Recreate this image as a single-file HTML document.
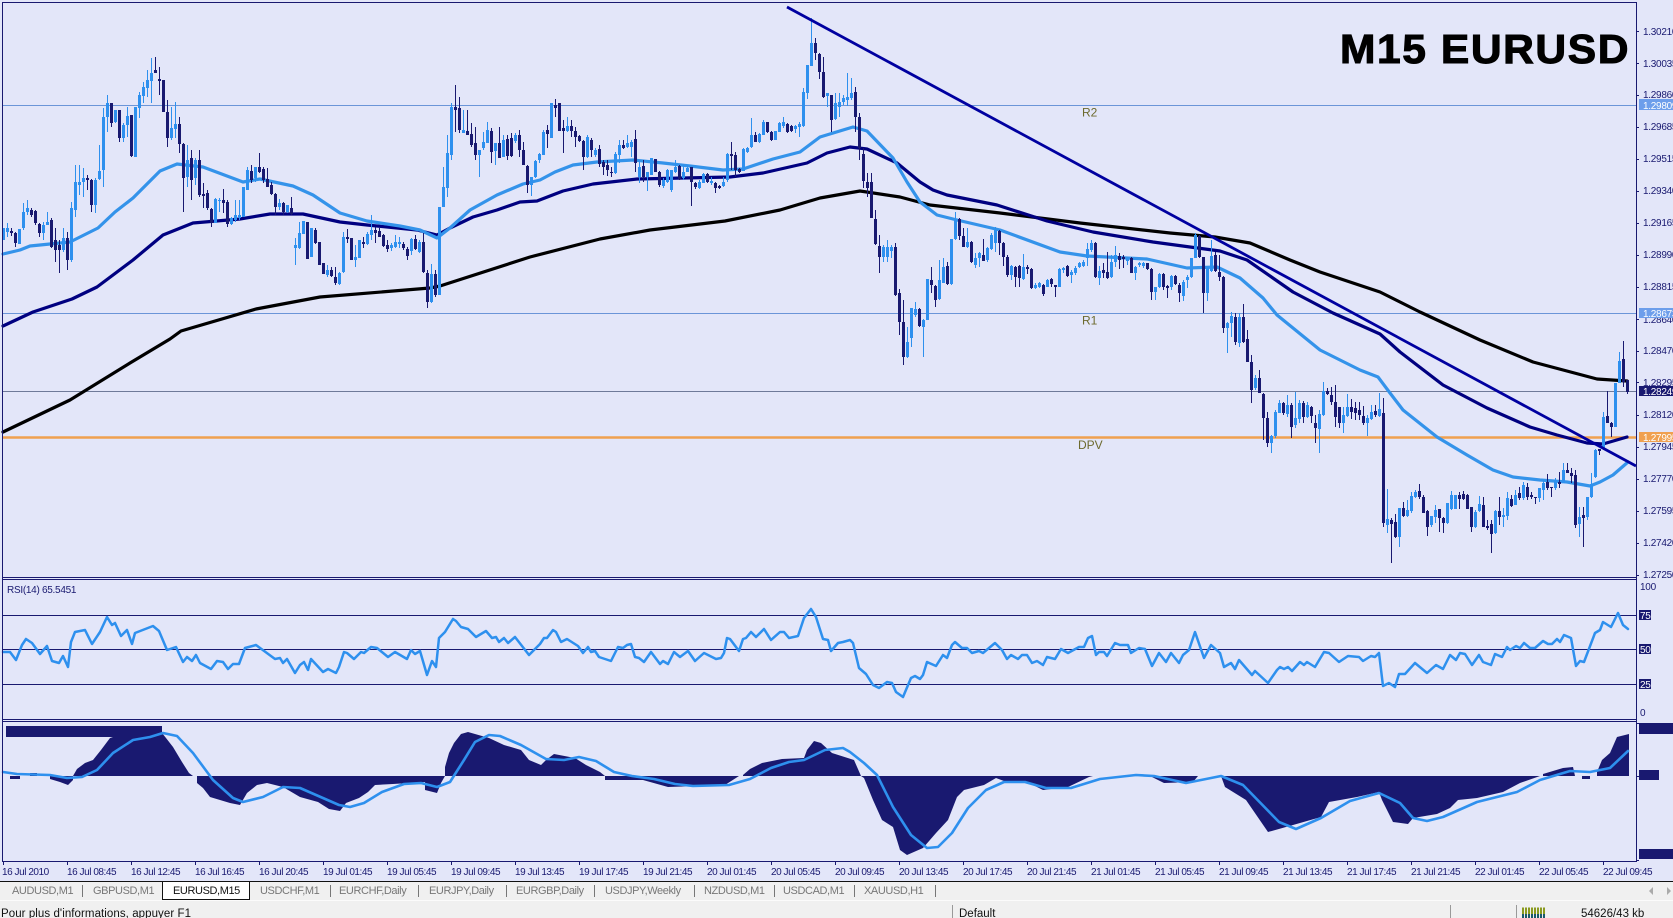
<!DOCTYPE html>
<html><head><meta charset="utf-8"><title>M15 EURUSD</title>
<style>
html,body{margin:0;padding:0;background:#e3e6f9;overflow:hidden}
svg{display:block}
text{font-family:"Liberation Sans",sans-serif}
.p{font-size:10px;fill:#191970;letter-spacing:-.28px}
.t{font-size:10px;fill:#191970;letter-spacing:-.45px}
.w{font-size:10px;fill:#fff;letter-spacing:-.28px}
.tb{font-size:11px;fill:#777;letter-spacing:-.4px}
.st{font-size:11.5px;fill:#111}
.ln{fill:none;stroke-linejoin:round;stroke-linecap:round}
.lw,.dw{fill:none;stroke-width:1;shape-rendering:crispEdges}
.lb,.db{fill:none;stroke-width:3;shape-rendering:crispEdges}
.lw,.lb{stroke:#2e90ee}
.dw,.db{stroke:#191970}
</style></head><body>
<svg width="1673" height="918" viewBox="0 0 1673 918" xmlns="http://www.w3.org/2000/svg">
<rect width="1673" height="881" fill="#e3e6f9"/>

<!-- horizontal levels -->
<path d="M3 105.5H1636M3 313.5H1636" stroke="#6b95d8" stroke-width="1" fill="none"/>
<path d="M3 391.5H1636" stroke="#6f7a99" stroke-width="1" fill="none"/>
<path d="M3 437.5H1636" stroke="#f0a050" stroke-width="2.4" fill="none"/>
<text x="1082" y="116.5" font-size="12" fill="#6d6a2e">R2</text>
<text x="1082" y="324.5" font-size="12" fill="#6d6a2e">R1</text>
<text x="1078" y="449" font-size="12" fill="#6d6a2e">DPV</text>

<!-- moving averages -->
<polyline class="ln" stroke="#000" stroke-width="3.2" points="3,432 70,400 130,363 170,339 181,331 256,309 320,297 430,288 440,286 530,257 600,239 650,230 725,221 780,210 820,198 860,191 900,197 930,205 1000,213 1080,223 1170,233 1215,237 1250,243 1290,260 1320,272 1380,292 1420,312 1480,340 1533,362 1597,379 1627,381"/>
<polyline class="ln" stroke="#000080" stroke-width="3.2" points="3,326 33,312 72,299 97,287 133,260 163,235 193,223 240,219 270,214 303,214 340,222 367,225 417,230 437,235 450,228 473,217 497,210 520,202 537,201 563,191 593,184 637,179 730,177 763,173 807,163 827,153 850,147 867,149 897,163 920,182 933,190 947,195 997,205 1047,221 1093,232 1153,242 1190,247 1220,251 1247,260 1293,292 1333,313 1380,334 1400,352 1443,385 1487,408 1530,427 1557,435 1587,443 1603,444 1627,437"/>
<polyline class="ln" stroke="#3493ea" stroke-width="3.2" points="3,254 20,250 30,246 70,242 98,228 115,212 133,198 160,171 177,164 203,167 243,182 260,179 293,186 313,195 340,213 367,221 400,226 420,230 437,238 450,228 470,210 497,195 523,184 540,180 555,172 573,165 597,162 633,160 663,163 690,166 723,170 743,169 773,159 800,152 820,137 853,127 867,131 893,158 907,182 920,202 937,215 957,220 1000,230 1060,252 1087,256 1147,259 1187,268 1217,267 1240,278 1263,298 1277,315 1320,350 1360,370 1378,377 1390,393 1403,410 1437,437 1467,455 1493,470 1513,477 1540,480 1567,482 1590,486 1600,482 1613,475 1628,462"/>

<!-- candles group A -->
<g transform="translate(-.5 0)">
<path class="lw" d="M4 228V240M8 223V237M20 229V244M24 203V230M28 200V215M44 222V240M48 212V225M64 228V252M72 202V262M76 165V217M80 165V195M84 168V197M96 178V213M100 145V180M104 108V187M108 95V132M116 110V123M124 123V142M128 107V137M136 107V157M140 92V118M144 82V103M148 70V97M152 58V103M172 107V140M176 102V138M188 145V187M196 158V185M216 198V223M220 198V212M232 217V225M236 200V222M240 200V220M244 187V217M248 167V190M256 167V182M280 199V210M288 205V213M296 238V265M300 222V249M304 221V234M312 228V257M328 265V277M340 272V285M344 232V273M356 245V267M360 240V258M368 232V245M372 215V240M392 243V251M396 235V248M400 237V248M412 238V255M420 240V253M432 264V303"/>
<path class="lb" d="M4 228V240M8 228V232M20 229V244M24 212V228M28 208V212M44 225V233M48 222V225M64 238V250M72 208V260M76 182V210M80 182V185M84 178V182M96 180V205M100 171V179M104 117V170M108 103V117M116 110V122M124 125V138M128 116V125M136 107V157M140 95V108M144 87V96M148 80V88M152 73V81M172 128V138M176 124V129M188 160V177M196 160V178M216 199V223M220 200V201M232 218V224M236 215V220M240 215V218M244 187V217M248 170V190M256 167V178M280 203V207M288 205V212M296 245V248M300 233V248M304 221V234M312 228V257M328 270V275M340 273V284M344 237V272M356 257V260M360 240V258M368 234V244M372 230V235M392 245V248M396 242V247M400 242V244M412 239V251M420 242V252M432 274V302"/>
<path class="dw" d="M12 228V236M16 232V247M32 208V217M36 210V225M40 223V237M52 218V248M56 228V262M60 240V273M68 232V270M88 175V190M92 179V212M112 103V127M120 110V142M132 115V157M156 57V73M160 67V95M164 80V112M168 100V147M180 117V153M184 143V212M192 150V200M200 150V197M204 183V208M208 190V210M212 208V227M224 189V213M228 200V227M252 165V183M260 153V173M264 167V183M268 168V187M272 182V195M276 193V215M284 202V215M292 197V215M308 222V259M316 228V244M320 242V265M324 263V274M332 267V277M336 267V285M348 229V243M352 238V260M364 237V248M376 227V243M380 228V237M384 234V247M388 240V252M404 242V250M408 247V260M416 235V250M424 233V273M428 270V308M436 270V297"/>
<path class="db" d="M12 231V233M16 233V243M32 210V215M36 211V223M40 224V233M52 220V247M56 240V250M60 245V250M68 238V260M88 178V180M92 180V205M112 103V123M120 110V138M132 115V156M156 70V73M160 79V81M164 80V112M168 112V138M180 124V144M184 144V178M192 158V180M200 160V195M204 194V196M208 193V208M212 209V223M224 200V203M228 202V224M252 171V180M260 167V172M264 169V180M268 179V187M272 185V194M276 194V207M284 203V212M292 208V214M308 222V259M316 230V243M320 242V265M324 263V274M332 270V276M336 277V283M348 237V239M352 238V260M364 242V244M376 230V233M380 231V237M384 235V246M388 245V249M404 244V248M408 249V256M416 239V249M424 242V272M428 273V302M436 274V295"/>
</g>

<!-- candles group B -->
<g transform="translate(.5 0)">
<path class="lw" d="M439 207V295M443 167V207M447 135V197M451 103V160M463 110V133M479 150V177M483 132V150M487 122V143M495 143V165M503 135V157M515 133V143M531 177V196M535 160V178M539 153V163M543 130V155M551 103V138M567 117V132M587 135V158M595 148V157M615 152V174M619 140V163M627 135V148M631 140V157M639 160V183M647 172V191M651 158V175M663 178V188M667 169V183M671 170V192M675 160V173M683 165V180M687 165V172M699 180V189M703 173V183M711 177V185M723 177V187M727 153V182M743 148V171M747 147V153M751 118V148M759 133V143M763 120V135M775 131V140M779 122V132M783 117V128M795 125V133M799 122V137M803 88V127M807 65V99M811 18V65M827 93V107M835 93V120M839 93V117M843 95V105M847 73V106M851 78V100M883 245V262M887 240V262M891 245V258M907 327V358M911 308V347M915 302V317M923 319V357M927 279V320M939 260V300M943 258V283M951 239V285M955 212V240M967 228V248M975 253V268M979 252V267M987 247V262M991 233V250M995 227V252M1011 265V280M1023 254V280M1035 283V289M1039 282V288M1047 279V287M1059 268V287M1063 267V273M1071 270V283M1075 266V275M1079 262V268M1083 260V267M1087 243V266M1091 240V252M1099 266V285M1111 255V278M1115 246V267M1127 257V265M1135 266V280M1139 262V267M1143 262V268M1155 287V300M1159 273V288M1171 275V290M1183 280V301M1187 275V288M1191 258V278M1195 233V258M1207 267V301M1211 240V272M1227 322V353M1231 312V337M1239 313V347M1255 375V390M1271 435V453M1275 410V438M1279 400V413M1287 395V417M1295 392V428M1299 400V423M1307 402V418M1319 410V453M1323 382V416M1343 407V433M1347 394V417M1367 415V436M1371 405V420M1379 393V417M1387 489V533M1399 508V547M1407 500V517M1411 492V513M1415 490V498M1431 516V527M1435 505V523M1447 503V524M1451 491V510M1455 495V509M1475 510V528M1479 496V512M1495 510V534M1503 508V527M1507 492V520M1515 490V505M1523 482V500M1539 488V502M1543 480V500M1555 478V490M1563 463V483M1579 507V537M1587 497V520M1591 473V498M1595 449V478M1603 412V450M1615 383V427M1619 352V383"/>
<path class="lb" d="M439 207V295M443 187V207M447 153V188M451 107V155M463 130V133M479 150V155M483 142V148M487 130V143M495 143V151M503 140V157M515 135V141M531 177V185M535 161V177M539 154V160M543 132V155M551 103V138M567 126V131M587 137V157M595 150V155M615 154V173M619 145V155M627 143V147M631 142V147M639 167V177M647 172V177M651 158V175M663 180V186M667 170V182M671 170V190M675 167V172M683 172V178M687 168V172M699 182V188M703 174V183M711 181V183M723 182V186M727 154V180M743 149V171M747 148V152M751 135V147M759 134V142M763 122V135M775 131V140M779 123V132M783 122V126M795 126V129M799 124V127M803 92V126M807 65V93M811 43V66M827 93V96M835 103V119M839 102V107M843 98V102M847 97V100M851 93V98M883 247V257M887 247V257M891 247V251M907 342V357M911 308V338M915 309V315M923 320V327M927 279V320M939 280V299M943 267V283M951 239V284M955 220V239M967 242V247M975 258V265M979 253V258M987 248V260M991 235V249M995 230V243M1011 266V275M1023 267V279M1035 285V288M1039 283V287M1047 280V287M1059 269V287M1063 268V270M1071 272V275M1075 268V273M1079 263V267M1083 262V266M1087 249V258M1091 243V250M1099 271V278M1111 262V277M1115 255V262M1127 258V261M1135 267V273M1139 263V265M1143 263V266M1155 287V292M1159 274V287M1171 276V287M1183 282V296M1187 277V280M1191 258V277M1195 235V258M1207 268V293M1211 256V271M1227 323V328M1231 316V323M1239 317V343M1255 378V388M1271 436V443M1275 412V436M1279 403V413M1287 405V414M1295 418V425M1299 403V419M1307 405V417M1319 414V429M1323 391V415M1343 415V423M1347 407V416M1367 418V423M1371 412V419M1379 409V416M1387 519V525M1399 508V537M1407 510V516M1411 496V511M1415 492V497M1431 516V525M1435 510V517M1447 503V523M1451 495V509M1455 495V509M1475 512V527M1479 504V511M1495 511V533M1503 515V517M1507 498V516M1515 495V505M1523 485V498M1539 488V498M1543 483V490M1555 480V488M1563 470V483M1579 517V524M1587 497V517M1591 484V497M1595 450V477M1603 417V448M1615 383V427M1619 361V383"/>
<path class="dw" d="M455 85V132M459 97V133M467 110V135M471 123V147M475 127V160M491 128V163M499 127V158M507 135V160M511 133V157M519 130V157M523 142V165M527 165V193M547 125V148M555 99V117M559 103V131M563 120V153M571 120V137M575 127V147M579 135V142M583 140V170M591 138V157M599 145V167M603 160V175M607 160V176M611 167V177M623 140V149M635 130V172M643 160V182M655 159V172M659 171V187M679 165V180M691 167V206M695 182V189M707 173V183M715 182V193M719 185V189M731 142V170M735 152V177M739 168V173M755 132V142M767 122V133M771 131V141M787 123V133M791 125V132M815 38V60M819 53V79M823 57V98M831 95V132M855 87V132M859 113V160M863 148V188M867 173V197M871 173V218M875 210V245M879 235V273M895 243V296M899 289V335M903 300V365M919 308V327M931 267V293M935 285V307M947 262V285M959 218V240M963 228V247M971 241V263M983 239V261M999 230V255M1003 242V266M1007 255V277M1015 266V287M1019 265V287M1027 265V274M1031 268V289M1043 284V296M1051 278V287M1055 285V297M1067 265V277M1095 242V278M1103 263V278M1107 252V279M1119 253V269M1123 255V268M1131 257V273M1147 263V270M1151 268V300M1163 273V290M1167 285V298M1175 275V285M1179 283V302M1199 235V258M1203 257V313M1215 252V272M1219 255V281M1223 276V333M1235 313V345M1243 304V343M1247 330V362M1251 355V403M1259 370V393M1263 393V440M1267 412V447M1283 402V415M1291 403V438M1303 401V423M1311 406V423M1315 415V443M1327 388V395M1331 387V405M1335 385V427M1339 407V428M1351 399V419M1355 402V420M1359 402V420M1363 406V425M1375 405V417M1383 398V527M1391 518V563M1395 514V538M1403 502V517M1419 484V499M1423 495V513M1427 510V536M1439 509V532M1443 517V533M1459 492V509M1463 491V500M1467 494V509M1471 507V532M1483 497V527M1487 520V530M1491 520V553M1499 497V525M1511 495V507M1519 487V500M1527 483V500M1531 492V499M1535 497V504M1547 474V490M1551 487V497M1559 472V488M1567 463V473M1571 468V483M1575 470V528M1583 507V547M1599 449V455M1607 391V423M1611 422V437M1623 341V387M1627 380V394"/>
<path class="db" d="M455 107V110M459 108V130M467 131V135M471 134V145M475 143V155M491 131V152M499 143V158M507 139V156M511 138V156M519 135V150M523 150V165M527 166V185M547 130V134M555 105V108M559 103V131M563 128V131M571 126V131M575 131V137M579 136V141M583 141V157M591 140V150M599 149V164M603 162V167M607 165V170M611 172V173M623 145V148M635 139V163M643 166V177M655 159V172M659 172V185M679 166V179M691 167V182M695 183V187M707 174V182M715 183V188M719 186V188M731 154V156M735 155V170M739 169V172M755 135V142M767 122V132M771 132V140M787 124V132M791 126V131M815 43V53M819 54V72M823 72V97M831 95V120M855 92V117M859 117V148M863 154V181M867 182V188M871 182V218M875 219V244M879 246V257M895 247V295M899 293V322M903 322V357M919 309V326M931 280V285M935 286V300M947 266V284M959 219V236M963 236V247M971 242V262M983 255V261M999 231V243M1003 243V257M1007 257V275M1015 267V277M1019 266V278M1027 267V269M1031 269V288M1043 285V294M1051 279V284M1055 285V287M1067 266V276M1095 243V277M1103 270V273M1107 272V278M1119 256V260M1123 257V259M1131 258V273M1147 263V269M1151 269V292M1163 274V287M1167 286V288M1175 276V284M1179 285V293M1199 236V257M1203 257V293M1215 255V271M1219 272V277M1223 277V328M1235 317V342M1243 317V342M1247 339V362M1251 362V390M1259 378V393M1263 394V418M1267 418V443M1283 403V413M1291 405V427M1303 403V417M1311 407V416M1315 423V428M1327 391V394M1331 395V402M1335 402V417M1339 407V423M1351 407V412M1355 408V413M1359 410V415M1363 416V423M1375 411V415M1383 413V523M1391 520V524M1395 522V537M1403 508V516M1419 491V497M1423 497V513M1427 511V527M1439 509V518M1443 518V523M1459 495V499M1463 494V499M1467 495V509M1471 507V527M1483 505V527M1487 526V528M1491 524V534M1499 511V517M1511 499V506M1519 493V498M1527 487V497M1531 495V497M1535 497V498M1547 482V488M1551 487V488M1559 482V484M1567 470V473M1571 473V476M1575 475V525M1583 515V518M1599 449V451M1607 416V423M1611 423V427M1623 359V382M1627 380V392"/>
</g>

<!-- trend line -->
<line x1="787" y1="7" x2="1636" y2="466" stroke="#0000a0" stroke-width="2.8"/>

<!-- title -->
<text x="1340" y="63" font-size="41" font-weight="bold" fill="#000" stroke="#000" stroke-width="1" letter-spacing="1.5" textLength="290" lengthAdjust="spacingAndGlyphs">M15 EURUSD</text>

<!-- RSI -->
<path d="M3 615.5H1636M3 649.5H1636M3 684.5H1636" stroke="#191970" stroke-width="1" fill="none"/>
<text x="7" y="593" class="p">RSI(14) 65.5451</text>
<polyline class="ln" stroke="#2e90ee" stroke-width="2.5" points="3,652 10,652 16,660 22,645 26,639 32,643 40,654 47,646 52,661 59,663 63,656 68,667 71,642 75,632 85,630 92,644 100,632 107,617 112,625 115,623 121,636 127,630 132,644 135,633 153,626 159,631 167,650 176,647 183,662 187,657 192,661 196,655 200,663 211,669 217,661 223,662 228,669 233,664 239,664 245,648 256,645 275,659 280,658 283,663 287,659 295,673 300,665 304,662 308,670 311,659 323,672 328,669 336,673 339,667 344,652 347,653 354,659 361,652 364,653 371,647 377,648 388,657 395,652 407,659 411,650 415,654 420,651 427,675 432,661 436,667 439,638 445,632 453,619 456,621 461,627 468,629 476,637 486,631 492,638 496,637 499,642 504,638 508,643 515,637 529,655 540,644 544,638 547,638 553,630 556,632 561,642 567,639 578,646 583,653 588,647 591,652 595,651 599,657 611,661 618,647 623,648 627,645 631,644 635,657 639,658 644,662 651,652 660,664 663,661 668,664 674,652 680,657 688,651 695,661 704,653 716,659 721,658 724,653 727,638 730,639 739,651 743,639 746,638 751,632 756,637 764,629 771,640 780,632 784,632 789,638 798,636 804,618 811,609 816,617 823,639 828,640 831,651 838,643 843,642 850,640 853,643 859,668 866,674 873,685 879,688 887,682 892,683 896,692 903,697 911,678 915,676 920,679 923,675 927,662 936,666 943,655 947,658 952,645 955,642 962,648 967,648 972,653 979,651 983,653 995,643 1002,650 1007,659 1011,655 1018,659 1022,655 1027,655 1032,663 1037,661 1043,665 1047,657 1055,659 1061,649 1068,653 1079,647 1084,647 1088,638 1092,636 1096,655 1099,652 1104,652 1107,656 1115,643 1120,645 1128,645 1131,653 1139,648 1145,649 1152,666 1159,653 1166,662 1171,653 1179,663 1183,655 1189,650 1195,632 1204,658 1211,645 1220,653 1224,667 1231,663 1235,669 1239,660 1252,675 1255,671 1268,683 1277,670 1280,667 1284,669 1288,667 1292,671 1300,662 1304,665 1307,662 1315,667 1324,652 1329,653 1339,662 1348,656 1359,657 1363,661 1371,656 1375,657 1379,653 1383,686 1389,683 1395,687 1399,674 1405,674 1415,663 1427,673 1436,665 1443,669 1450,655 1456,660 1460,653 1465,654 1472,665 1479,655 1483,662 1491,665 1495,654 1502,657 1507,647 1510,650 1516,646 1520,648 1524,643 1530,648 1535,648 1543,641 1548,644 1552,644 1557,639 1560,642 1564,635 1571,638 1576,666 1580,661 1584,662 1595,633 1600,630 1603,622 1611,627 1618,613 1623,625 1628,629"/>

<!-- MACD histogram -->
<path fill="#191970" d="M6 726H162V733L166 738 173 747 182 762 189 773 193 776H73L77 769 85 763 93 760 101 750 110 738 113 737H6Z"/>
<path fill="#191970" d="M10 776H20V779H10Z"/>
<path fill="#191970" d="M30 773H37V776H30Z"/>
<path fill="#191970" d="M50 776H73V780L68 785 60 782 50 779Z"/>
<path fill="#191970" d="M197 776V783L203 788 210 797 230 803 240 805 247 793 257 785 267 783 283 787 300 797 318 802 329 809 340 811 346 803 359 798 368 792 375 785 393 784 425 782V790L437 793 441 783 445 776Z"/>
<path fill="#191970" d="M445 776V767L449 753 454 743 461 734 468 732 482 736 489 738 504 745 521 750 529 760 541 765 546 760 554 754 575 758 586 765 600 772 605 776Z"/>
<path fill="#191970" d="M605 776V780H643L668 787 725 785 739 776Z"/>
<path fill="#191970" d="M743 776V775L750 769 762 763 782 759 804 758 807 750 814 741 821 743 832 753 854 760 861 776Z"/>
<path fill="#191970" d="M861 776L864 778 873 800 882 820 893 827 900 850 907 855 923 848 936 833 948 820 957 797 964 790 984 785 996 778 1004 781 1029 783 1043 790 1068 787 1089 777 1093 776Z"/>
<path fill="#191970" d="M1150 776L1164 783 1193 782 1198 776Z"/>
<path fill="#191970" d="M1221 776L1225 787 1246 800 1268 832 1293 825 1321 817 1329 802 1357 797 1379 792 1382 800 1393 822 1408 824 1413 818 1437 814 1450 808 1458 800 1477 798 1503 792 1520 783 1540 776Z"/>
<path fill="#191970" d="M1543 776V774L1563 768 1573 767 1575 776Z"/>
<path fill="#191970" d="M1582 776V779H1590V776Z"/>
<path fill="#191970" d="M1597 776V772L1602 760 1610 753 1617 737 1629 734V776Z"/>
<!-- MACD signal -->
<polyline class="ln" stroke="#2e90ee" stroke-width="2.6" points="3,772 17,774 50,775 67,778 82,777 97,770 113,753 133,740 150,737 163,733 177,736 193,753 213,780 233,798 243,802 263,797 283,787 300,788 339,805 350,807 364,803 382,792 404,784 421,783 437,787 450,782 464,760 475,742 489,735 500,736 521,745 546,759 564,760 579,757 596,761 614,772 632,776 654,779 675,784 693,786 729,785 750,779 771,768 789,762 804,760 825,750 843,748 850,752 864,763 877,775 893,807 911,835 927,848 938,847 952,833 968,808 986,790 1004,782 1025,782 1046,788 1071,788 1100,779 1136,775 1154,776 1186,783 1221,776 1243,785 1279,822 1296,829 1321,818 1350,801 1379,793 1400,803 1413,818 1427,821 1443,817 1477,802 1517,792 1540,780 1570,771 1590,772 1610,768 1628,751"/>

<!-- frames -->
<path d="M2.5 2.5H1636.5V861.5H2.5ZM3 577.5H1636M3 579.5H1636M3 719.5H1636M3 721.5H1636" fill="none" stroke="#191970" stroke-width="1"/>

<!-- price ticks -->
<path d="M1636 31.5h3M1636 63.5h3M1636 95.5h3M1636 127.5h3M1636 159.5h3M1636 191.5h3M1636 223.5h3M1636 255.5h3M1636 287.5h3M1636 319.5h3M1636 351.5h3M1636 382.5h3M1636 415.5h3M1636 447.5h3M1636 479.5h3M1636 511.5h3M1636 543.5h3M1636 575.5h3M1636 723.5h3M1636 776.5h3M1636 860.5h3" stroke="#191970" fill="none"/>
<text class="p" x="1643" y="35">1.30210</text>
<text class="p" x="1643" y="67">1.30035</text>
<text class="p" x="1643" y="98">1.29860</text>
<text class="p" x="1643" y="130">1.29685</text>
<text class="p" x="1643" y="162">1.29515</text>
<text class="p" x="1643" y="194">1.29340</text>
<text class="p" x="1643" y="226">1.29165</text>
<text class="p" x="1643" y="258">1.28990</text>
<text class="p" x="1643" y="290">1.28815</text>
<text class="p" x="1643" y="323">1.28640</text>
<text class="p" x="1643" y="354">1.28470</text>
<text class="p" x="1643" y="386">1.28295</text>
<text class="p" x="1643" y="418">1.28120</text>
<text class="p" x="1643" y="450">1.27945</text>
<text class="p" x="1643" y="482">1.27770</text>
<text class="p" x="1643" y="514">1.27595</text>
<text class="p" x="1643" y="546">1.27420</text>
<text class="p" x="1643" y="578">1.27250</text>
<rect x="1639" y="99" width="34" height="11" fill="#6d9eeb"/><text class="w" x="1643" y="109">1.29809</text>
<rect x="1639" y="308" width="34" height="10" fill="#6d9eeb"/><text class="w" x="1643" y="317">1.28673</text>
<rect x="1639" y="386" width="34" height="10" fill="#191970"/><text class="w" x="1643" y="395">1.28249</text>
<rect x="1639" y="432" width="34" height="10" fill="#f0a050"/><text class="w" x="1643" y="441">1.27995</text>

<!-- RSI axis -->
<text class="p" x="1640" y="590">100</text>
<rect x="1639" y="610" width="12" height="10" fill="#191970"/><text class="w" x="1640" y="619">75</text>
<rect x="1639" y="644" width="12" height="10" fill="#191970"/><text class="w" x="1640" y="653">50</text>
<rect x="1639" y="679" width="12" height="10" fill="#191970"/><text class="w" x="1640" y="688">25</text>
<text class="p" x="1640" y="716">0</text>

<!-- MACD axis blocks -->
<rect x="1639" y="723" width="34" height="11" fill="#191970"/>
<rect x="1639" y="770" width="20" height="10" fill="#191970"/>
<rect x="1639" y="849" width="34" height="10" fill="#191970"/>

<!-- time ticks -->
<path d="M3.5 861v4M67.5 861v4M131.5 861v4M195.5 861v4M259.5 861v4M323.5 861v4M387.5 861v4M451.5 861v4M515.5 861v4M579.5 861v4M643.5 861v4M707.5 861v4M771.5 861v4M835.5 861v4M899.5 861v4M963.5 861v4M1027.5 861v4M1091.5 861v4M1155.5 861v4M1219.5 861v4M1283.5 861v4M1347.5 861v4M1411.5 861v4M1475.5 861v4M1539.5 861v4M1603.5 861v4" stroke="#191970" fill="none"/>
<text class="t" x="2" y="875">16 Jul 2010</text>
<text class="t" x="67" y="875">16 Jul 08:45</text>
<text class="t" x="131" y="875">16 Jul 12:45</text>
<text class="t" x="195" y="875">16 Jul 16:45</text>
<text class="t" x="259" y="875">16 Jul 20:45</text>
<text class="t" x="323" y="875">19 Jul 01:45</text>
<text class="t" x="387" y="875">19 Jul 05:45</text>
<text class="t" x="451" y="875">19 Jul 09:45</text>
<text class="t" x="515" y="875">19 Jul 13:45</text>
<text class="t" x="579" y="875">19 Jul 17:45</text>
<text class="t" x="643" y="875">19 Jul 21:45</text>
<text class="t" x="707" y="875">20 Jul 01:45</text>
<text class="t" x="771" y="875">20 Jul 05:45</text>
<text class="t" x="835" y="875">20 Jul 09:45</text>
<text class="t" x="899" y="875">20 Jul 13:45</text>
<text class="t" x="963" y="875">20 Jul 17:45</text>
<text class="t" x="1027" y="875">20 Jul 21:45</text>
<text class="t" x="1091" y="875">21 Jul 01:45</text>
<text class="t" x="1155" y="875">21 Jul 05:45</text>
<text class="t" x="1219" y="875">21 Jul 09:45</text>
<text class="t" x="1283" y="875">21 Jul 13:45</text>
<text class="t" x="1347" y="875">21 Jul 17:45</text>
<text class="t" x="1411" y="875">21 Jul 21:45</text>
<text class="t" x="1475" y="875">22 Jul 01:45</text>
<text class="t" x="1539" y="875">22 Jul 05:45</text>
<text class="t" x="1603" y="875">22 Jul 09:45</text>

<!-- tabs -->
<rect y="881" width="1673" height="37" fill="#f0f0f0"/>
<rect y="881" width="1673" height="1" fill="#111"/>
<rect y="900" width="1673" height="1" fill="#fbfbfb"/>
<rect x="162.5" y="881.5" width="87" height="18" fill="#fff" stroke="#111"/>
<path d="M82.5 885v12M330.5 885v12M418.5 885v12M506.5 885v12M594.5 885v12M694.5 885v12M774.5 885v12M854.5 885v12M935.5 885v12" stroke="#777" fill="none"/>
<text class="tb" x="12" y="894">AUDUSD,M1</text>
<text class="tb" x="93" y="894">GBPUSD,M1</text>
<text class="tb" x="173" y="894" style="fill:#111">EURUSD,M15</text>
<text class="tb" x="260" y="894">USDCHF,M1</text>
<text class="tb" x="339" y="894">EURCHF,Daily</text>
<text class="tb" x="429" y="894">EURJPY,Daily</text>
<text class="tb" x="516" y="894">EURGBP,Daily</text>
<text class="tb" x="605" y="894">USDJPY,Weekly</text>
<text class="tb" x="704" y="894">NZDUSD,M1</text>
<text class="tb" x="783" y="894">USDCAD,M1</text>
<text class="tb" x="864" y="894">XAUUSD,H1</text>
<path d="M1653 887v8l-4-4ZM1667 887v8l4-4Z" fill="#aaa"/>

<!-- status bar -->
<text class="st" x="1" y="917" textLength="190" lengthAdjust="spacing">Pour plus d'informations, appuyer F1</text>
<path d="M952.5 905v13M1450.5 905v13M1516.5 905v13" stroke="#999" fill="none"/>
<text class="st" x="959" y="917">Default</text>
<line x1="1522" y1="911" x2="1545" y2="911" stroke="#8a9a20" stroke-width="7" stroke-dasharray="2 1"/>
<line x1="1522" y1="916" x2="1545" y2="916" stroke="#1a5a6a" stroke-width="4" stroke-dasharray="2 1"/>
<text class="st" x="1581" y="917">54626/43 kb</text>
</svg>
</body></html>
